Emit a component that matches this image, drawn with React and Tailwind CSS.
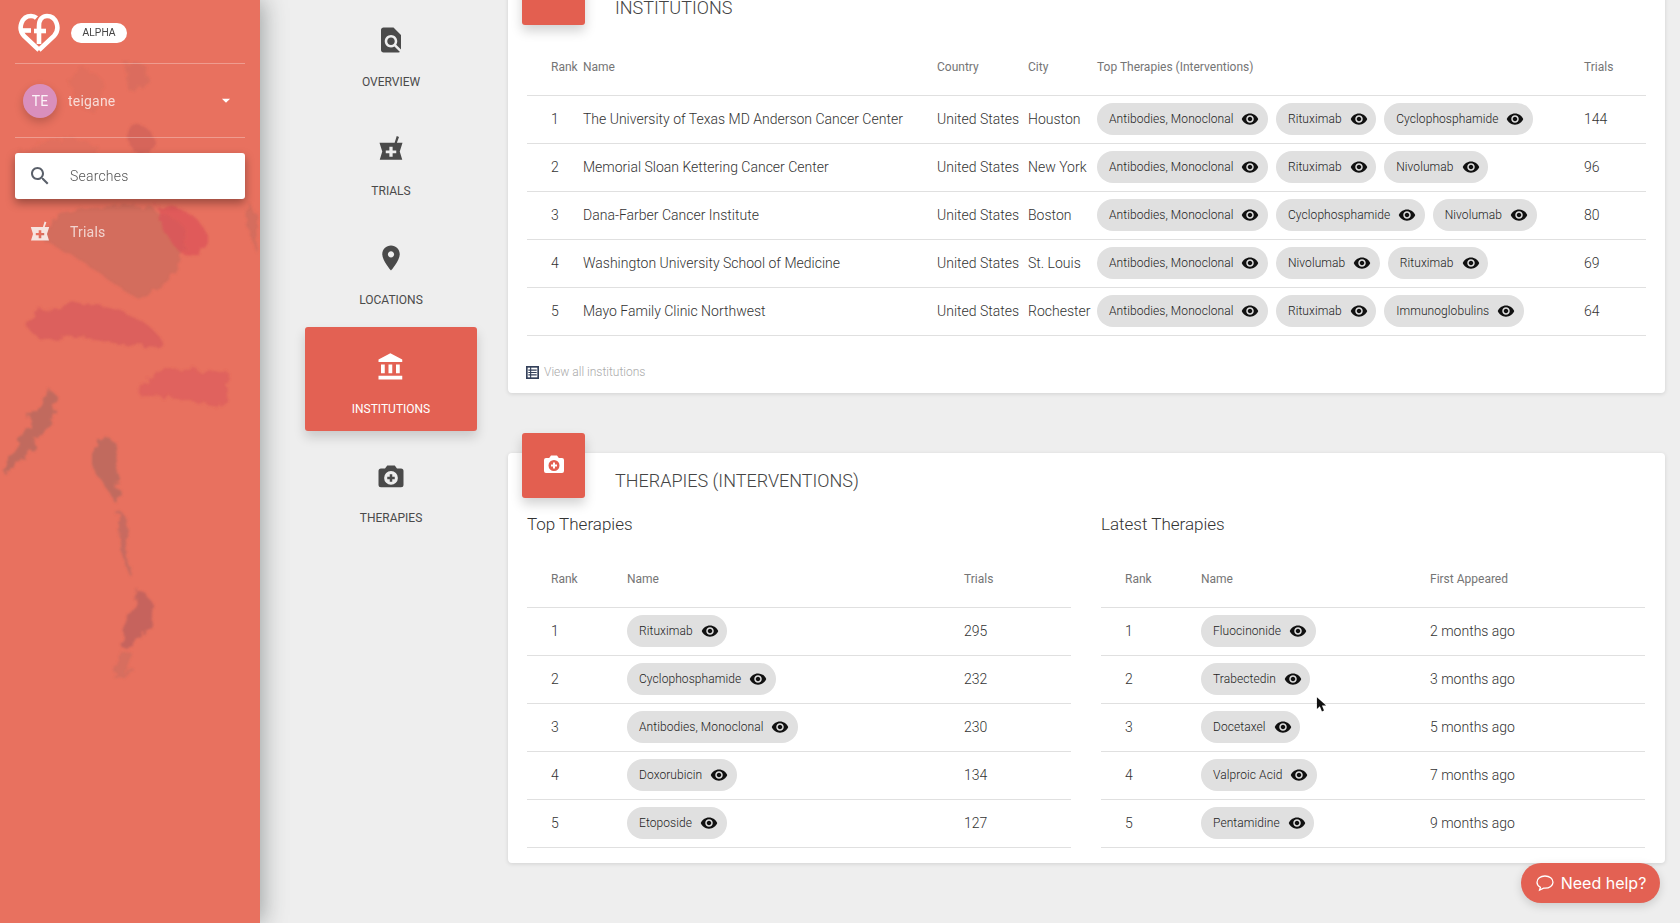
const eyePath = "M12 4.5C7 4.5 2.73 7.61 1 12c1.73 4.39 6 7.5 11 7.5s9.27-3.11 11-7.5c-1.73-4.39-6-7.5-11-7.5zM12 17c-2.76 0-5-2.24-5-5s2.24-5 5-5 5 2.24 5 5-2.24 5-5 5zm0-8c-1.66 0-3 1.34-3 3s1.34 3 3 3 3-1.34 3-3-1.34-3-3-3z";

const Icon = ({ d, className }) => (
    <svg viewBox="0 0 24 24" fill="currentColor" fillRule="evenodd" className={className}>
        <path d={d} />
    </svg>
);

const icons = {
    overview: "M20 19.59V8l-6-6H6c-1.1 0-1.99.9-1.99 2L4 20c0 1.1.89 2 1.99 2H18c.45 0 .85-.15 1.19-.4l-4.43-4.43c-.8.52-1.74.83-2.76.83-2.76 0-5-2.24-5-5s2.24-5 5-5 5 2.24 5 5c0 1.02-.31 1.96-.83 2.75L20 19.59zM9 13c0 1.66 1.34 3 3 3s3-1.34 3-3-1.34-3-3-3-3 1.34-3 3z",
    trials: "M16.600 1.600l1.800.7-1.700 4.700H21.200l-1 3.200-1.200 3.800 2 6.500H3l2-6.500-1.200-3.800-1-3.200h12.100zM10.700 10.200v2.900H7.800v2.200h2.900v2.900h2.600v-2.900h2.900v-2.200h-2.900v-2.900z",
    location: "M12 2C8.13 2 5 5.13 5 9c0 5.25 7 13 7 13s7-7.75 7-13c0-3.87-3.13-7-7-7zm0 9.5c-1.38 0-2.5-1.12-2.5-2.5s1.12-2.5 2.5-2.5 2.5 1.12 2.5 2.5-1.12 2.5-2.5 2.5z",
    institution: "M4 10v7h3v-7H4zm6 0v7h3v-7h-3zM2 22h19v-3H2v3zm14-12v7h3v-7h-3zm-4.5-9L2 6v2h19V6l-9.5-5z",
    therapy: "M20 6h-3.2L15 3.500H9L7.200 6H4a2 2 0 0 0-2 2v11a2 2 0 0 0 2 2h16a2 2 0 0 0 2-2V8a2 2 0 0 0-2-2zM12 8a5.500 5.500 0 1 1 0 11 5.500 5.500 0 0 1 0-11zm-1 2.500v2h-2v2h2v2h2v-2h2v-2h-2v-2z",
};

const navItems = [
    { label: "OVERVIEW", icon: icons.overview },
    { label: "TRIALS", icon: icons.trials },
    { label: "LOCATIONS", icon: icons.location },
    { label: "INSTITUTIONS", icon: icons.institution, active: true },
    { label: "THERAPIES", icon: icons.therapy },
];

const institutions = [
    ["1", "The University of Texas MD Anderson Cancer Center", "United States", "Houston", ["Antibodies, Monoclonal", "Rituximab", "Cyclophosphamide"], "144"],
    ["2", "Memorial Sloan Kettering Cancer Center", "United States", "New York", ["Antibodies, Monoclonal", "Rituximab", "Nivolumab"], "96"],
    ["3", "Dana-Farber Cancer Institute", "United States", "Boston", ["Antibodies, Monoclonal", "Cyclophosphamide", "Nivolumab"], "80"],
    ["4", "Washington University School of Medicine", "United States", "St. Louis", ["Antibodies, Monoclonal", "Nivolumab", "Rituximab"], "69"],
    ["5", "Mayo Family Clinic Northwest", "United States", "Rochester", ["Antibodies, Monoclonal", "Rituximab", "Immunoglobulins"], "64"],
];

const topTherapies = [
    ["1", "Rituximab", "295"],
    ["2", "Cyclophosphamide", "232"],
    ["3", "Antibodies, Monoclonal", "230"],
    ["4", "Doxorubicin", "134"],
    ["5", "Etoposide", "127"],
];

const latestTherapies = [
    ["1", "Fluocinonide", "2 months ago"],
    ["2", "Trabectedin", "3 months ago"],
    ["3", "Docetaxel", "5 months ago"],
    ["4", "Valproic Acid", "7 months ago"],
    ["5", "Pentamidine", "9 months ago"],
];

const Logo = () => (
    <svg viewBox="0 0 42 40" fill="none" stroke="#fff" strokeWidth="4.6" className="w-[42px] h-[40px]">
        <path d="M21 37 L6 23 C-1 15 4 3 13 3 C15.500 3 17 3.600 18.500 5" />
        <path d="M4 17.500 H13" />
        <path d="M21 31 V13 C21 6 25 3 29 3 C38 3 43 15 36 23 L21 37" />
        <path d="M16 18 H28" />
    </svg>
);

// rough, painted looking marks behind the sidebar content
const SidebarTexture = () => (
    <svg viewBox="0 0 260 923" className="absolute inset-0 w-[260px] h-[923px]">
        <filter id="rough" x="-20%" y="-20%" width="140%" height="140%">
            <feTurbulence type="fractalNoise" baseFrequency="0.09" numOctaves="3" seed="4" />
            <feDisplacementMap in="SourceGraphic" scale="14" />
            <feGaussianBlur stdDeviation="1.2" />
        </filter>
        <g filter="url(#rough)">
            <path d="M126 64 C140 60 150 64 148 78 C146 90 136 94 128 90z" fill="#c9685c" opacity="0.4" />
            <path d="M72 72 C84 66 100 72 104 86 C106 100 92 116 84 110 C74 100 68 84 72 72z" fill="#c9685c" opacity="0.2" />
            <path d="M128 128 C140 122 152 128 156 142 C156 154 140 156 132 150z" fill="#c45a58" opacity="0.5" />
            <path d="M22 152 C40 140 70 132 100 148 C90 170 50 182 26 172z" fill="#c9685c" opacity="0.22" />
            <path d="M38 238 C70 250 100 276 135 296 C165 296 186 270 184 228 C170 206 120 204 80 208 C60 214 45 224 38 238z" fill="#c4695c" opacity="0.6" />
            <path d="M158 208 C180 204 202 216 206 236 C204 254 190 264 178 250 C166 236 156 222 158 208z" fill="#db5058" opacity="0.65" />
            <path d="M56 308 C80 298 115 304 140 320 C155 330 165 340 158 346 C130 348 100 340 70 336 C50 342 30 340 26 322 C34 312 46 310 56 308z" fill="#d4555c" opacity="0.6" />
            <path d="M142 380 C165 366 205 366 230 374 C228 392 226 408 212 406 C190 398 160 398 140 396z" fill="#d9565c" opacity="0.55" />
            <path d="M50 390 C62 396 58 412 44 432 C30 452 14 470 4 474 C4 460 18 444 26 428 C36 410 42 398 50 390z" fill="#bd6a5e" opacity="0.9" />
            <path d="M94 446 C104 436 114 432 116 450 C120 470 120 490 116 504 C108 490 98 480 94 466z" fill="#bd6a5e" opacity="0.9" />
            <path d="M119 512 C126 510 128 530 130 576 C124 570 118 540 119 512z" fill="#c46a5f" opacity="0.9" />
            <path d="M138 590 C148 590 154 604 152 618 C146 636 132 650 120 646 C126 628 132 608 138 590z" fill="#c2635c" opacity="0.9" />
            <path d="M120 652 C128 648 136 652 130 666 C124 678 116 682 114 676z" fill="#c96c5f" opacity="0.55" />
            <path d="M248 202 C256 208 258 220 258 254 C250 240 246 220 248 202z" fill="#c4695c" opacity="0.55" />
        </g>
    </svg>
);

const Sidebar = () => (
    <aside className="relative z-20 w-[260px] h-full shrink-0 bg-[#e8715f] overflow-hidden shadow-[3px_0_22px_rgba(40,50,50,0.4)]">
        <SidebarTexture />
        <div className="relative px-[15px]">
            <div className="flex items-center h-[64px] pl-[3px] pt-[2px] border-b border-white/30">
                <Logo />
                <span className="ml-[11px] flex items-center justify-center w-[56px] h-[20px] rounded-full bg-white text-[10px] text-[#444] font-['Liberation_Sans',sans-serif]">ALPHA</span>
            </div>
            <div className="flex items-center h-[74px] pl-[8px] border-b border-white/30">
                <span className="flex items-center justify-center w-[34px] h-[34px] rounded-full bg-[#d98fbc] text-white/90 text-sm shadow-[0_4px_10px_rgba(0,0,0,0.2)]">TE</span>
                <span className="ml-[11px] text-sm text-white/75 tracking-[0.2px]">teigane</span>
                <svg viewBox="0 0 24 24" fill="#fff" className="ml-auto mr-[12px] w-[14px] h-[14px]"><path d="M5 8l7 7 7-7z" /></svg>
            </div>
            <div className="flex items-center h-[46px] mt-[15px] pl-[13px] bg-white rounded-[3px] shadow-[0_4px_10px_rgba(0,0,0,0.35)]">
                <Icon d="M15.500 14h-.79l-.28-.27C15.410 12.590 16 11.110 16 9.500 16 5.910 13.090 3 9.500 3S3 5.910 3 9.500 5.910 16 9.500 16c1.610 0 3.090-.59 4.230-1.570l.27.28v.79l5 4.990L20.490 19l-4.990-5zm-6 0C7.010 14 5 11.990 5 9.500S7.010 5 9.500 5 14 7.010 14 9.500 11.990 14 9.500 14z" className="w-[24px] h-[24px] text-[#5a606a]" />
                <span className="ml-[18px] text-sm font-light text-[#555] tracking-[0.2px]">Searches</span>
            </div>
            <div className="flex items-center h-[36px] mt-[15px] pl-[13px]">
                <Icon d={icons.trials} className="w-[24px] h-[24px] text-[#f6e4e0]" />
                <span className="ml-[18px] text-sm text-white/70 tracking-[0.2px]">Trials</span>
            </div>
        </div>
    </aside>
);

const SectionNav = () => (
    <nav className="w-[248px] shrink-0 pl-[45px] pr-[31px] flex flex-col gap-[5px]">
        {navItems.map((item) => (
            <div
                key={item.label}
                className={`flex flex-col items-center h-[104px] pt-[25px] rounded-[3px] ${item.active ? "bg-[#e36153] text-white shadow-[0_6px_12px_rgba(0,0,0,0.16)]" : "text-[#4a4a4a]"}`}
            >
                <Icon d={item.icon} className="w-[30px] h-[30px]" />
                <span className="mt-[19px] text-xs leading-4">{item.label}</span>
            </div>
        ))}
    </nav>
);

const Chip = ({ name }) => (
    <span className="inline-flex items-center h-[32px] pl-[12px] pr-[8.5px] gap-[8px] rounded-full bg-[#e0e0e0] text-xs tracking-[0.08px] text-[#222]">
        {name}
        <Icon d={eyePath} className="w-[18px] h-[18px] text-[#111]" />
    </span>
);

const CardHeading = ({ icon, title }) => (
    <>
        <div className="absolute -top-5 left-[14px] flex items-center justify-center w-[63px] h-[65px] rounded-[3px] bg-[#e35f50] text-white shadow-[0_6px_12px_rgba(0,0,0,0.18)]">
            {icon && <Icon d={icon} className="w-[24px] h-[24px] -mt-[4px]" />}
        </div>
        <h2 className="pl-[107px] pt-[16px] text-lg leading-6 font-light text-[#444]">{title}</h2>
    </>
);

const InstitutionsTable = () => {
    const cols = "grid grid-cols-[56px_354px_91px_69px_487px_61px] items-center";
    return (
        <div className="mt-[19px] mx-[19px]">
            <div className={`${cols} h-[57px] border-b border-[#e0e0e0] text-xs text-[#757575]`}>
                <span className="pl-6">Rank</span>
                <span>Name</span>
                <span>Country</span>
                <span>City</span>
                <span>Top Therapies (Interventions)</span>
                <span>Trials</span>
            </div>
            {institutions.map((row) => (
                <div key={row[0]} className={`${cols} h-[48px] pb-[2px] border-b border-[#e0e0e0] text-sm font-light text-[#333]`}>
                    <span className="pl-6">{row[0]}</span>
                    <span>{row[1]}</span>
                    <span>{row[2]}</span>
                    <span>{row[3]}</span>
                    <span className="flex gap-2">
                        {row[4].map((t) => <Chip key={t} name={t} />)}
                    </span>
                    <span>{row[5]}</span>
                </div>
            ))}
        </div>
    );
};

const TherapyTable = ({ title, cols, lastLabel, rows }) => (
    <div className="w-[544px]">
        <h3 className="text-[17px] leading-6 font-light text-[#333]">{title}</h3>
        <div className={`${cols} h-[72px] pt-[15px] items-center border-b border-[#e0e0e0] text-xs text-[#757575]`}>
            <span className="pl-6">Rank</span>
            <span>Name</span>
            <span>{lastLabel}</span>
        </div>
        {rows.map((row) => (
            <div key={row[0]} className={`${cols} h-[48px] pb-[2px] items-center border-b border-[#e0e0e0] text-sm font-light text-[#333]`}>
                <span className="pl-6">{row[0]}</span>
                <span><Chip name={row[1]} /></span>
                <span>{row[2]}</span>
            </div>
        ))}
    </div>
);

const App = () => {
    return (
        <div className="relative flex w-full h-screen overflow-hidden bg-[#eeeeee] font-['Roboto',sans-serif]">
            <Sidebar />
            <SectionNav />
            <main className="w-[1157px] shrink-0 -mt-[20px]">
                <section className="relative h-[413px] bg-white rounded-[4px] shadow-[0_1px_4px_rgba(0,0,0,0.12)]">
                    <CardHeading title="INSTITUTIONS" />
                    <InstitutionsTable />
                    <div className="flex items-center h-[20px] mt-[26px] ml-[18px] text-xs font-light text-[#aaa]">
                        <svg viewBox="0 0 14 14" className="w-[13px] h-[13px] mr-[5px]" fill="none" stroke="#34405a" strokeWidth="1.800">
                            <rect x="0.9" y="0.9" width="12.2" height="12.2" />
                            <path d="M5 1v12M2.500 4.400h9M2.500 7h9M2.500 9.600h9" strokeWidth="1.200" />
                        </svg>
                        View all institutions
                    </div>
                </section>
                <section className="relative mt-[60px] h-[410px] bg-white rounded-[4px] shadow-[0_1px_4px_rgba(0,0,0,0.12)]">
                    <CardHeading icon={icons.therapy} title="THERAPIES (INTERVENTIONS)" />
                    <div className="flex gap-[30px] mt-[19px] mx-[19px]">
                        <TherapyTable title="Top Therapies" cols="grid grid-cols-[100px_337px_107px]" lastLabel="Trials" rows={topTherapies} />
                        <TherapyTable title="Latest Therapies" cols="grid grid-cols-[100px_229px_215px]" lastLabel="First Appeared" rows={latestTherapies} />
                    </div>
                </section>
            </main>

            <button className="absolute right-[20px] bottom-[20px] z-30 flex items-center justify-center gap-[6px] w-[139px] h-[40px] rounded-full bg-[#e36153] text-white text-base font-['Inter',sans-serif] shadow-[0_3px_10px_rgba(0,0,0,0.15)]">
                <svg viewBox="0 0 20 20" className="w-[20px] h-[20px]" fill="none" stroke="#fff" strokeWidth="1.300">
                    <path d="M10 3c-4.600 0-8 2.700-8 6.200 0 2.200 1.300 4 3.400 5.100L4.600 17l4-1.900c.5.1.9.1 1.400.1 4.600 0 8-2.700 8-6S14.600 3 10 3z" />
                </svg>
                Need help?
            </button>

            <svg viewBox="0 0 12 18" className="absolute left-[1316px] top-[696px] z-30 w-[11px] h-[17px]" fill="#111">
                <path d="M1 1v13l3.200-3 2.300 5.500 2.200-1L6.500 10.200H11z" />
            </svg>
        </div>
    );
};

export default App;
